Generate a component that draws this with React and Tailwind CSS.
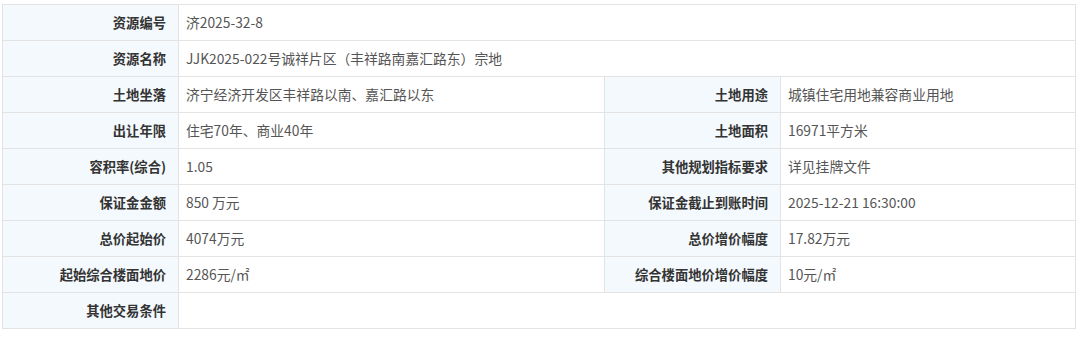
import React from "react";

const font = { fontFamily: '"Noto Sans CJK SC", "Noto Sans", sans-serif' };

function L({ children }) {
  return (
    <div className="h-[36px] border-r border-b border-[#e3e3e3] bg-[#f3f9fd] flex items-center justify-end pr-[12px] text-[13.3px] font-bold text-[#333]">
      {children}
    </div>
  );
}
function V({ children, span }) {
  return (
    <div
      className={
        "h-[36px] border-r border-b border-[#e3e3e3] bg-white flex items-center pl-[7px] text-[13.8px] text-[#555] " +
        (span ? "col-span-3" : "")
      }
    >
      {children}
    </div>
  );
}

export default function App() {
  return (
    <div className="w-[1080px] h-[337px] bg-white pt-[4px] pl-[2px]" style={font}>
      <div className="grid grid-cols-[176px_426px_176px_295px] w-[1074px] border-l border-t border-[#e3e3e3]">
        <L>资源编号</L>
        <V span>济2025-32-8</V>
        <L>资源名称</L>
        <V span>JJK2025-022号诚祥片区（丰祥路南嘉汇路东）宗地</V>
        <L>土地坐落</L>
        <V>济宁经济开发区丰祥路以南、嘉汇路以东</V>
        <L>土地用途</L>
        <V>城镇住宅用地兼容商业用地</V>
        <L>出让年限</L>
        <V>住宅70年、商业40年</V>
        <L>土地面积</L>
        <V>16971平方米</V>
        <L>容积率(综合)</L>
        <V>1.05</V>
        <L>其他规划指标要求</L>
        <V>详见挂牌文件</V>
        <L>保证金金额</L>
        <V>850 万元</V>
        <L>保证金截止到账时间</L>
        <V>2025-12-21 16:30:00</V>
        <L>总价起始价</L>
        <V>4074万元</V>
        <L>总价增价幅度</L>
        <V>17.82万元</V>
        <L>起始综合楼面地价</L>
        <V>2286元/㎡</V>
        <L>综合楼面地价增价幅度</L>
        <V>10元/㎡</V>
        <L>其他交易条件</L>
        <V span></V>
      </div>
    </div>
  );
}
